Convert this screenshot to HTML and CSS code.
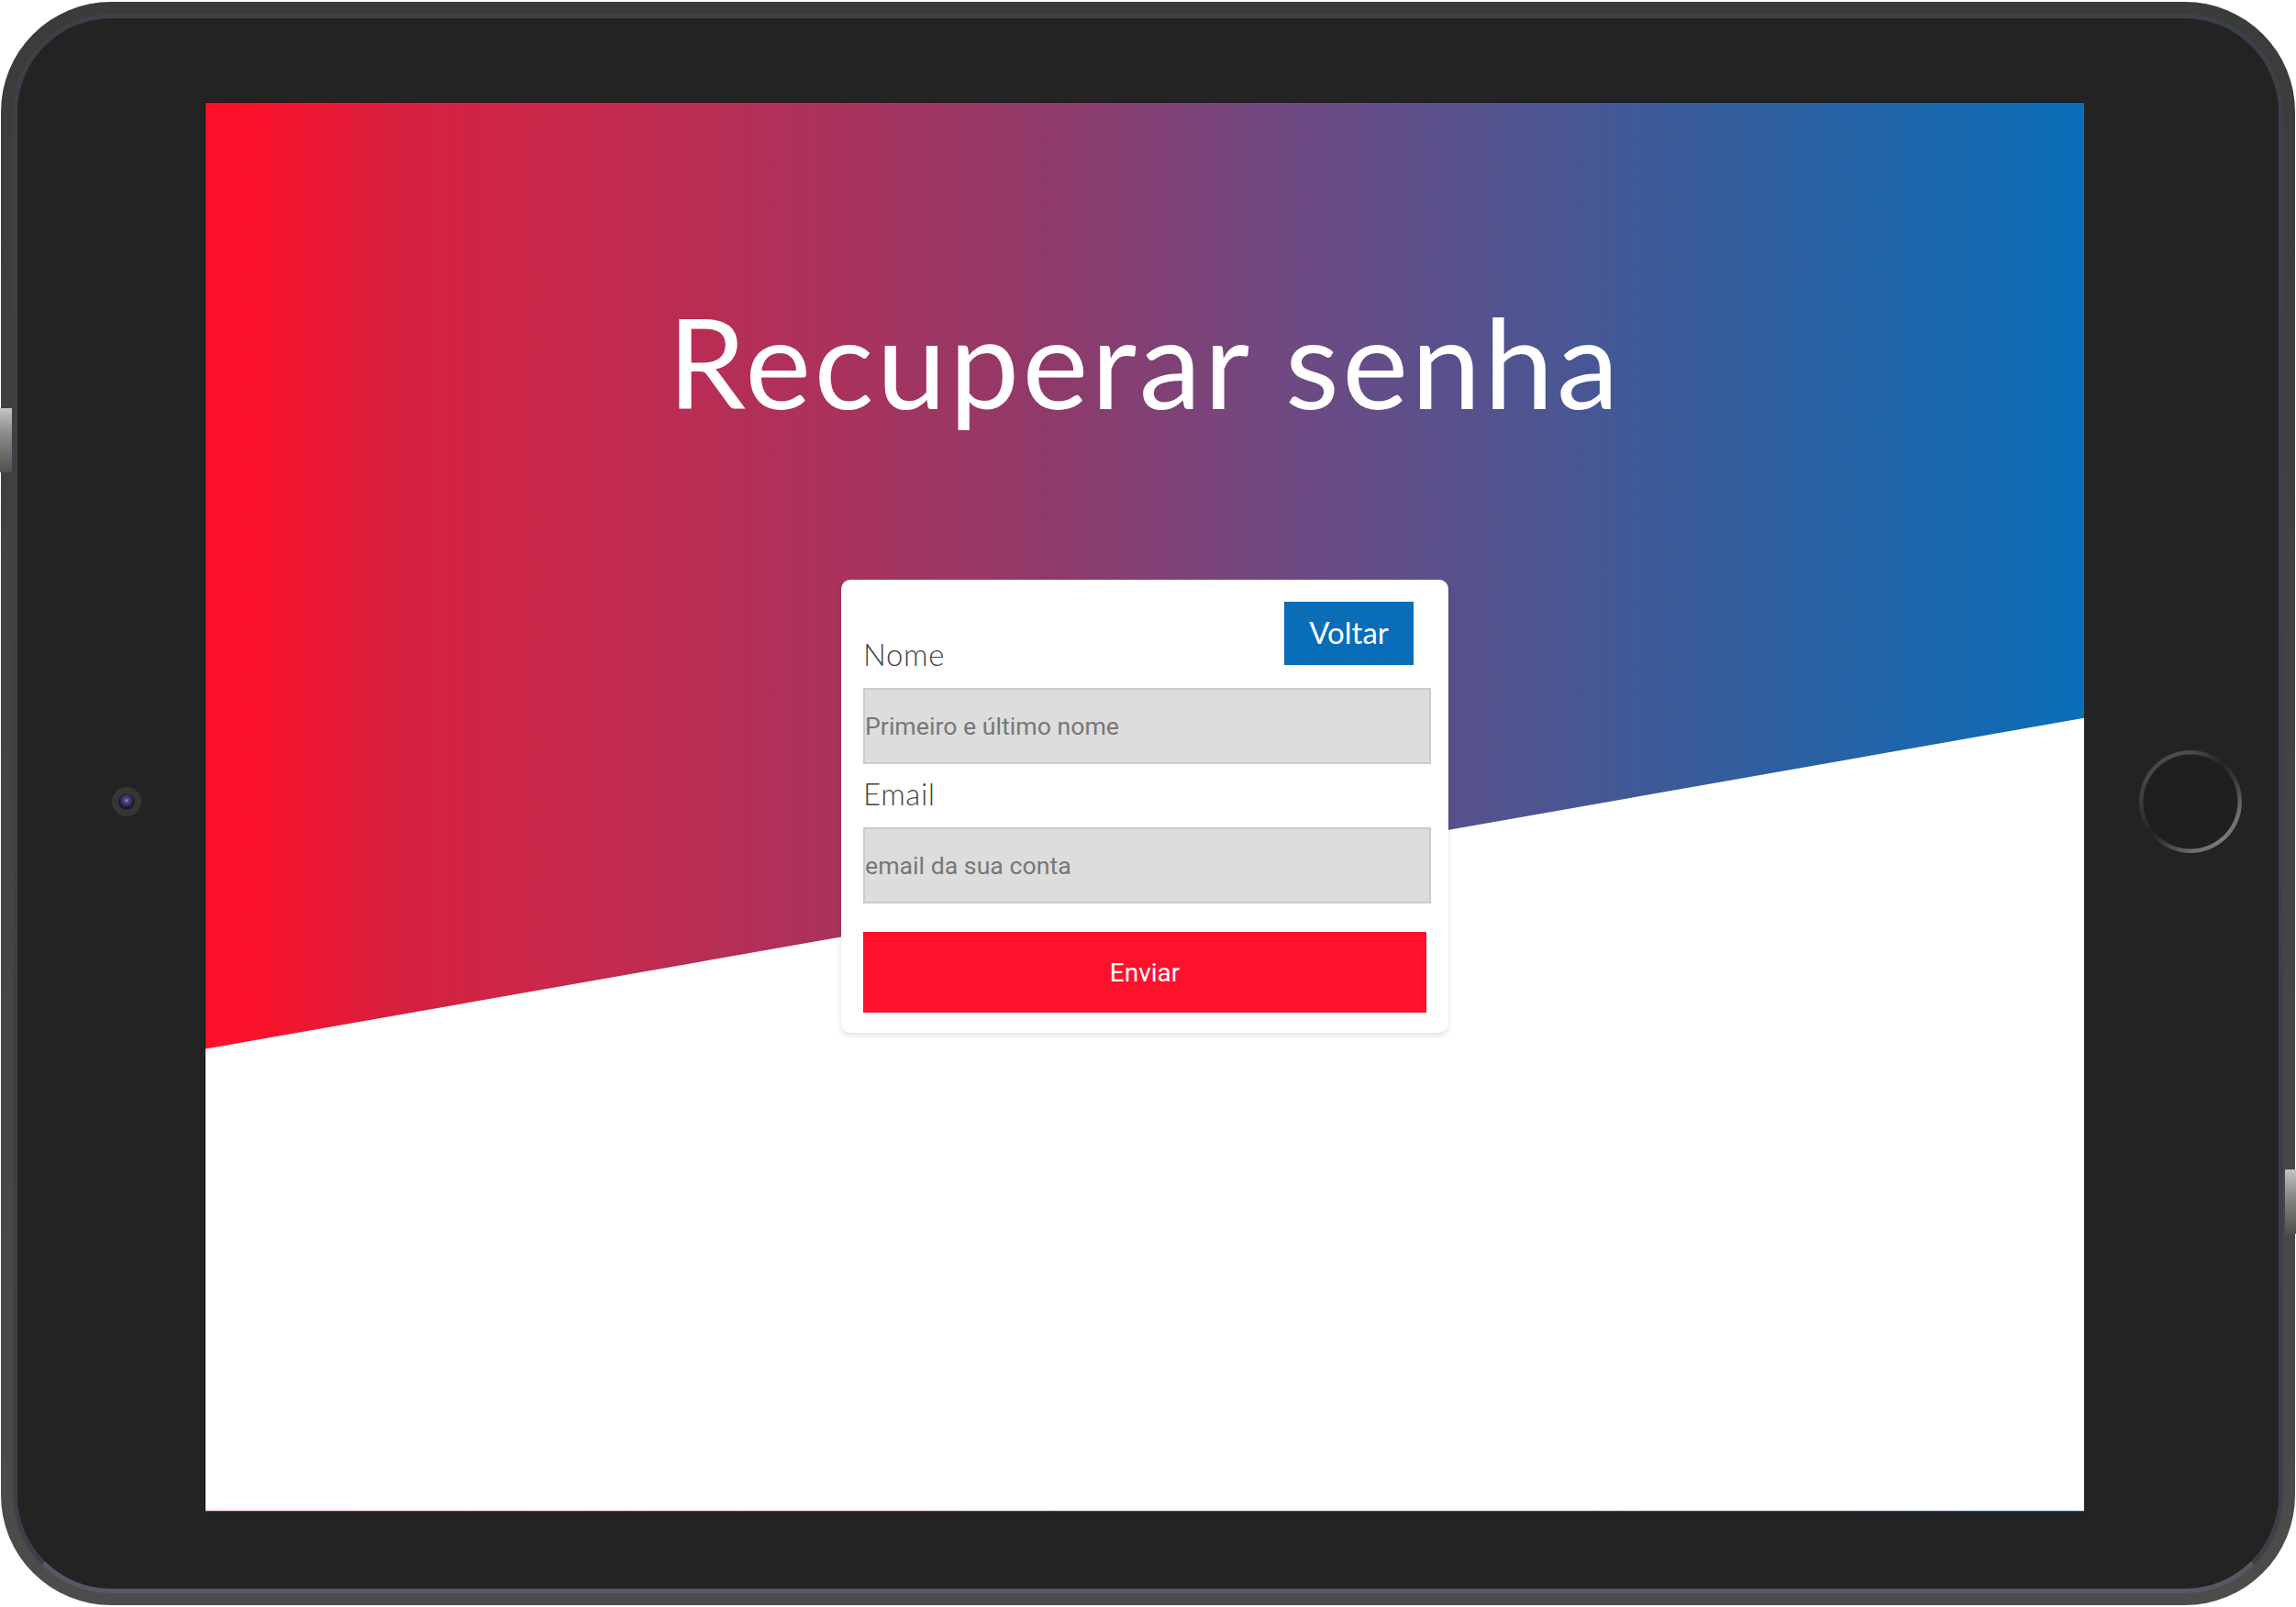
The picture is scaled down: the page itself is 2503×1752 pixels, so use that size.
FILE: index.html
```html
<!DOCTYPE html>
<html lang="pt-BR">
<head>
  <meta charset="UTF-8">
  <meta name="viewport" content="width=device-width, initial-scale=1.0">
  <title>Recuperar senha</title>
  <link rel="stylesheet" href="styles.css">
</head>
<body>

<div class="device">
  <span class="side-btn side-left"></span>
  <span class="side-btn side-right"></span>

  <div class="bezel">
    <div class="camera"><span class="lens"></span></div>

    <main class="screen">
      <h1 class="title">Recuperar senha</h1>

      <form class="card" onsubmit="return false">
        <div class="card-head">
          <label for="nome">Nome</label>
          <button type="button" class="btn-back">Voltar</button>
        </div>
        <input type="text" id="nome" placeholder="Primeiro e último nome">

        <label for="email" class="label-email">Email</label>
        <input type="email" id="email" placeholder="email da sua conta">

        <button type="submit" class="btn-send">Enviar</button>
      </form>
    </main>

    <div class="home-btn"></div>
  </div>
</div>

</body>
</html>
```

FILE: styles.css
```css
body {
  margin: 0;
  padding: 0;
  background-color: #ffffff;
  font-family: 'Lato', 'Open Sans', sans-serif;
}

/* moldura do tablet */
.device {
  position: relative;
  box-sizing: border-box;
  width: 2501px;
  height: 1748px;
  margin: 2px 0 0 1px;
  padding: 13px;
  border-radius: 120px;
  background: linear-gradient(#393c38, #4c4d4b);
}
.side-btn {
  position: absolute;
  width: 13px;
  height: 70px;
  background: linear-gradient(#c4c4c4, #8a8b88 40%, #4f514d);
}
.side-left {
  left: -1px;
  top: 443px;
}
.side-right {
  right: -1px;
  top: 1273px;
  width: 12px;
}
.bezel {
  box-sizing: border-box;
  height: 100%;
  border: 5px solid #3d4049;
  border-bottom-color: #565865;
  border-radius: 107px;
  background-color: #232323;
  padding-top: 91px;
  display: grid;
  grid-template-columns: 204px 2049px 1fr;
  grid-template-rows: 1537px;
  align-content: start;
  align-items: start;
}
.camera {
  align-self: center;
  margin: 0 0 11px 103px;
  width: 32px;
  height: 32px;
  border-radius: 50%;
  background-color: #363636;
  display: flex;
  align-items: center;
  justify-content: center;
}
.lens {
  width: 18px;
  height: 18px;
  border-radius: 50%;
  background: radial-gradient(circle at 50% 42%, #a79bc4 0, #5a4890 2px, #3d2f66 5px, #1c1a22 8px);
}
.home-btn {
  align-self: center;
  margin: 0 0 11px 60px;
  width: 112px;
  height: 112px;
  border-radius: 50%;
  background:
    radial-gradient(circle closest-side, #1f1f1f 51px, transparent 52px),
    conic-gradient(#4c4c4c 0deg, #3a3a3a 20deg, #232323 40deg, #3a3a3a 62deg, #6c6c6c 100deg, #7b7b7b 140deg, #6c6c6c 180deg, #3e3e3e 212deg, #232323 232deg, #353535 255deg, #474747 300deg, #4c4c4c 360deg);
}

/* tela */
.screen {
  position: relative;
  box-sizing: border-box;
  height: 1537px;
  border-top: 1px solid #111;
  border-left: 1px solid #111;
  background: linear-gradient(to right, #ff0f29 0%, #fb112c 2.5%, #d8203f 10%, #c8284b 19%, #ad315b 32%, #8f3a6a 45%, #6e4983 58%, #4d5591 71%, #2c5fa0 84%, #0a6eb8 100%);
  display: flex;
  flex-direction: column;
  align-items: center;
}
.screen::before {
  content: "";
  position: absolute;
  left: 0;
  right: 0;
  top: 0;
  bottom: 1px;
  background-color: #ffffff;
  clip-path: polygon(0 67.2%, 100% 43.7%, 100% 100%, 0 100%);
}
.title {
  position: relative;
  margin: 214px 0 0;
  font-size: 136px;
  line-height: 136px;
  font-weight: 400;
  letter-spacing: 3.4px;
  color: #ffffff;
}

.card {
  position: relative;
  box-sizing: border-box;
  width: 662px;
  margin-top: 170px;
  padding: 24px 24px 22px;
  background: white;
  border-radius: 10px;
  box-shadow: 0 3px 6px rgba(0,0,0,0.12);
}
.card-head {
  display: flex;
  justify-content: space-between;
  align-items: flex-end;
  height: 69px;
}
.card label {
  display: block;
  font-size: 33px;
  font-weight: 300;
  line-height: 24px;
  letter-spacing: 0.6px;
  color: #444;
}
.label-email {
  margin-top: 20px;
}
.btn-back {
  width: 141px;
  height: 69px;
  margin-right: 14px;
  padding: 0 0 3px;
  border: none;
  background-color: #0a6db8;
  color: white;
  font-family: 'Lato', 'Open Sans', sans-serif;
  font-size: 33px;
  cursor: pointer;
}
.card input {
  display: block;
  box-sizing: border-box;
  width: 619px;
  height: 83px;
  margin-top: 25px;
  padding: 0;
  border: 2px solid #cbcbcb;
  background-color: #dddddd;
  font-family: Roboto, 'Liberation Sans', Arial, sans-serif;
  font-size: 26.7px;
  color: #333;
}
.card input::placeholder {
  color: #777;
}
.btn-send {
  display: block;
  width: 100%;
  height: 88px;
  margin-top: 31px;
  border: none;
  background-color: #ff102b;
  color: white;
  font-family: Roboto, 'Liberation Sans', Arial, sans-serif;
  font-size: 28px;
  cursor: pointer;
}
```
